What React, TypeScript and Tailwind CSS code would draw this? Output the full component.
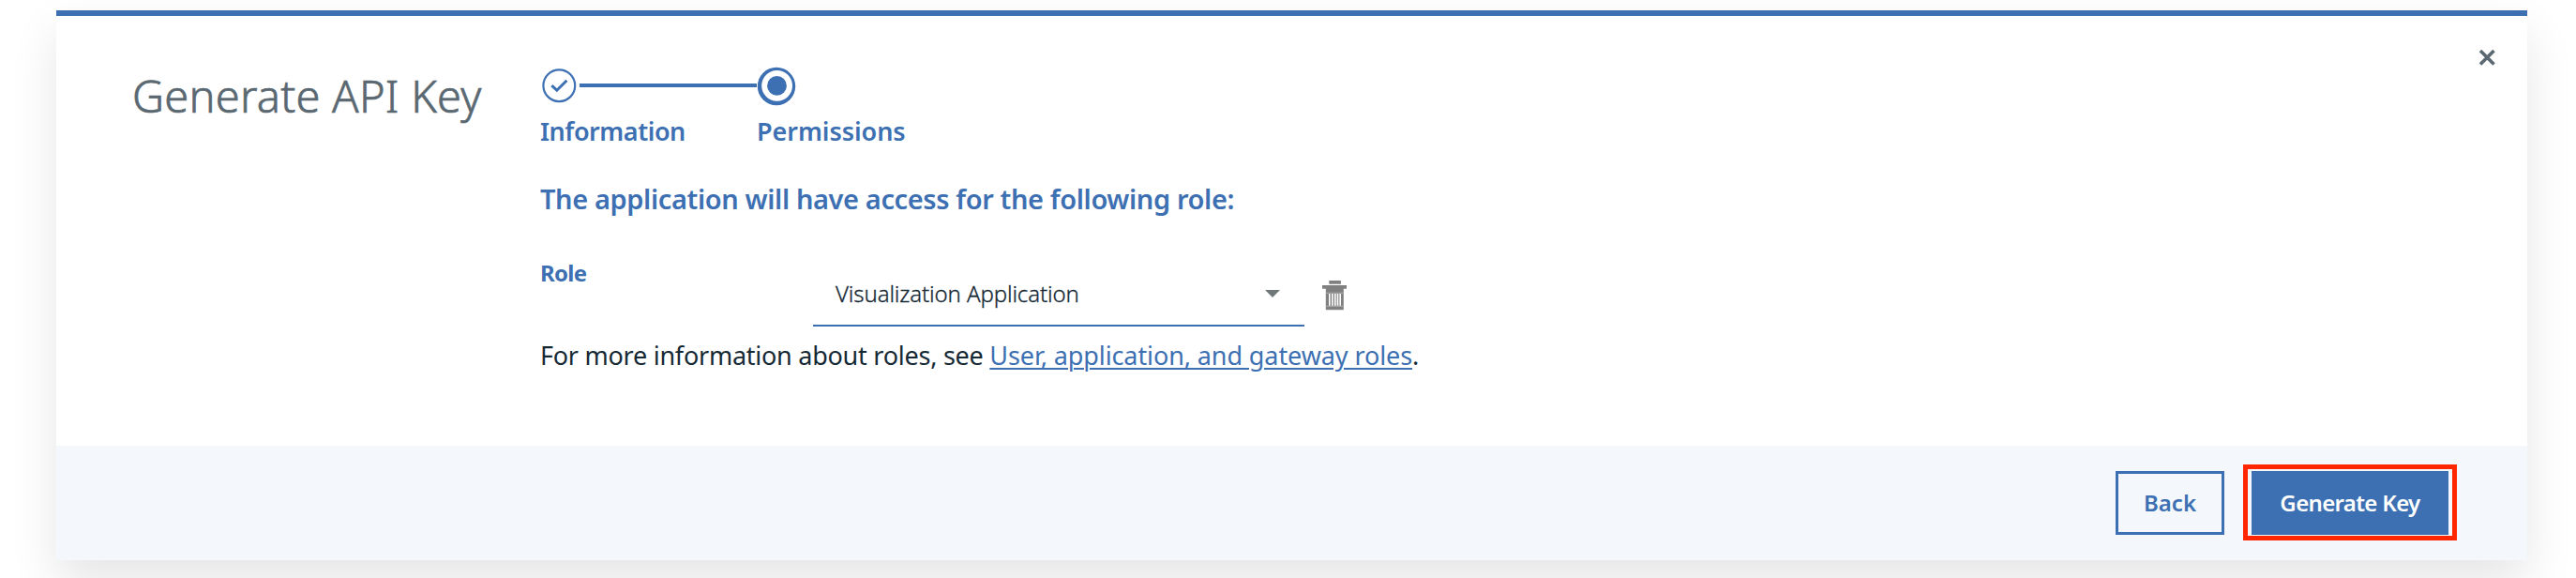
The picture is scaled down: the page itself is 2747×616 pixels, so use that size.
function CompleteIcon() {
  return (
    <svg className="h-[42px] w-[43px] shrink-0" viewBox="0 0 43 42" fill="none" stroke="#3d70b2">
      <circle cx="21.3" cy="21.2" r="16.9" strokeWidth="2.2" />
      <path d="M13.3 21.2 18.8 26.2 29.4 15.8" strokeWidth="3" />
    </svg>
  );
}

function CurrentIcon() {
  return (
    <svg className="h-[44px] w-[43px] shrink-0" viewBox="0 0 43 44">
      <circle cx="21" cy="23" r="20.2" fill="#3d70b2" />
      <circle cx="21.6" cy="22.3" r="16.4" fill="#fff" />
      <circle cx="21.5" cy="22.4" r="10.4" fill="#3d70b2" />
    </svg>
  );
}

function TrashIcon() {
  return (
    <svg className="h-[32px] w-[27px]" viewBox="0 0 27 32" fill="#808080">
      <path d="M7.3 0h12.6v3.7H7.3zM0 5h26v3.8H0zM3.8 8.8h19v22.4h-19z" />
      <path d="M3.8 13.2h19M3.8 27.3h19" stroke="#b3b3b3" strokeWidth=".9" />
      <path d="M7.8 14v12.8M10.9 14v12.8M13.8 14v12.8M16.5 14v12.8M19.2 14v12.8" stroke="#fff" strokeWidth="1.6" />
    </svg>
  );
}

function Stepper() {
  return (
    <div className="text-[27px] leading-[36px] font-semibold text-[#3d70b2]">
      <div className="flex h-[44px] items-center">
        <CompleteIcon />
        <div className="h-[4px] w-[189px] bg-[#3d70b2]" />
        <CurrentIcon />
      </div>
      <div className="mt-[9px] flex pl-[1px]">
        <span className="w-[231px] tracking-[-0.45px]">Information</span>
        <span className="tracking-[-0.05px]">Permissions</span>
      </div>
    </div>
  );
}

export default function App() {
  return (
    <div className="h-[616px] w-[2747px] overflow-hidden bg-white pt-[11px] pl-[60px] font-['Noto_Sans',sans-serif]">
      <section className="flex h-[586px] w-[2635px] flex-col border-t-[6px] border-[#3d70b2] bg-white shadow-[0_24px_48px_rgba(0,0,0,0.1)]">
        <div className="flex grow pr-[33px] pl-[81px]">
          <h1 className="mt-[55px] w-[434px] shrink-0 text-[47px] leading-[60px] font-light tracking-[0.25px] text-[#5a6872] [-webkit-text-stroke:0.7px_#5a6872]">
            Generate API Key
          </h1>
          <div className="grow pt-[52px]">
            <Stepper />
            <h2 className="mt-[34px] pl-[1px] text-[29px] leading-[40px] font-semibold tracking-[-0.38px] text-[#3d70b2]">
              The application will have access for the following role:
            </h2>
            <div className="mt-[43px] flex h-[73px]">
              <label className="w-[292px] pl-[1px] text-[24px] leading-[32px] font-bold tracking-[-0.7px] text-[#3d70b2]">Role</label>
              <button type="button" className="flex w-[524px] items-center justify-between border-b-2 border-[#3d70b2] pt-[5px] pr-[26px] pl-[24px] text-[24px] leading-[32px] font-light tracking-[-0.12px] text-[#152935] [-webkit-text-stroke:0.3px_#152935]">
                Visualization Application
                <svg className="h-[8px] w-[16px]" viewBox="0 0 16 8" fill="#6f7878"><path d="M0 0h16L8 8z" /></svg>
              </button>
              <button type="button" aria-label="Remove role" className="ml-[19px] self-start pt-[24px]">
                <TrashIcon />
              </button>
            </div>
            <p className="mt-[13px] pl-[1px] text-[27px] leading-[36px] tracking-[-0.25px] text-[#152935]">
              For more information about roles, see{' '}
              <a className="tracking-[-0.1px] text-[#3d70b2] underline decoration-2 underline-offset-[3px]">User, application, and gateway roles</a>.
            </p>
          </div>
          <button type="button" aria-label="Close" className="mt-[34px] h-[20px] w-[20px]">
            <svg viewBox="0 0 20 20" stroke="#5a6872" strokeWidth="3.6"><path d="M3 3 17.5 17.5M17.5 3 3 17.5" /></svg>
          </button>
        </div>
        <footer className="flex h-[122px] shrink-0 items-start justify-end bg-[#f4f7fb] pt-[20px] pr-[75px] text-[24px] leading-[32px] font-semibold">
          <button type="button" className="mt-[7px] h-[68px] w-[116px] border-[3px] border-[#3d70b2] text-[#3d70b2]">Back</button>
          <div className="ml-[20px] flex h-[81px] w-[228px] border-[5px] border-[#ff2600] pt-[2px] pl-[4px]">
            <button type="button" className="h-[68px] w-[210px] bg-[#3d70b2] tracking-[-0.65px] text-white">Generate Key</button>
          </div>
        </footer>
      </section>
    </div>
  );
}
